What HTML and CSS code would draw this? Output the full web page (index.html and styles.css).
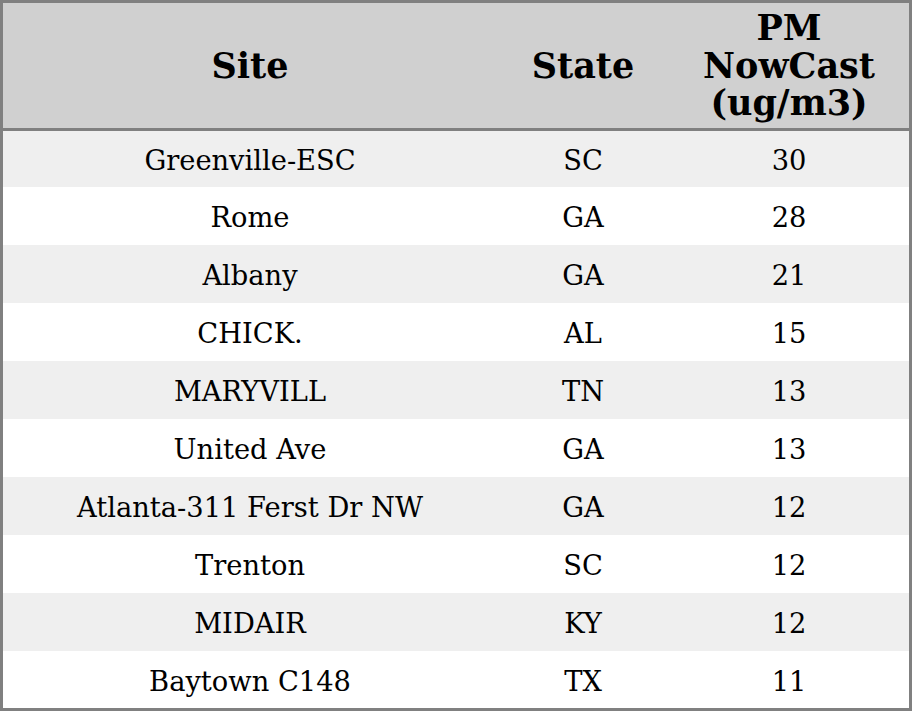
FILE: index.html
```html
<!DOCTYPE html>
<html>
<head>
<meta charset="utf-8">
<link rel="stylesheet" href="styles.css">
</head>
<body>
<table class="aq">
  <colgroup>
    <col class="c-site">
    <col class="c-state">
    <col class="c-pm">
  </colgroup>
  <thead>
    <tr><th>Site</th><th>State</th><th>PM<br>NowCast<br>(ug/m3)</th></tr>
  </thead>
  <tbody>
    <tr><td>Greenville-ESC</td><td>SC</td><td>30</td></tr>
    <tr><td>Rome</td><td>GA</td><td>28</td></tr>
    <tr><td>Albany</td><td>GA</td><td>21</td></tr>
    <tr><td>CHICK.</td><td>AL</td><td>15</td></tr>
    <tr><td>MARYVILL</td><td>TN</td><td>13</td></tr>
    <tr><td>United Ave</td><td>GA</td><td>13</td></tr>
    <tr><td>Atlanta-311 Ferst Dr NW</td><td>GA</td><td>12</td></tr>
    <tr><td>Trenton</td><td>SC</td><td>12</td></tr>
    <tr><td>MIDAIR</td><td>KY</td><td>12</td></tr>
    <tr><td>Baytown C148</td><td>TX</td><td>11</td></tr>
  </tbody>
</table>
</body>
</html>
```
FILE: styles.css
```css
html, body {
  margin: 0;
  padding: 0;
  background: #ffffff;
}
.aq {
  width: 912px;
  border: 3px solid #808080;
  border-collapse: separate;
  border-spacing: 0;
  table-layout: fixed;
  font-family: "DejaVu Serif", serif;
  color: #000;
}
.c-site { width: 494px; }
.c-state { width: 172px; }
.c-pm { width: 240px; }
.aq th {
  background: #d0d0d0;
  font-size: 35px;
  font-weight: bold;
  line-height: 37.5px;
  padding: 0;
  text-align: center;
  vertical-align: middle;
  border-bottom: 3px solid #808080;
  box-sizing: border-box;
}
.aq thead th { height: 128px; }
.aq td {
  font-size: 27.3px;
  line-height: 30px;
  height: 58px;
  padding: 4px 0 0;
  text-align: center;
  vertical-align: middle;
  box-sizing: border-box;
}
.aq tbody tr:nth-child(odd) td { background: #efefef; }
.aq tbody tr:first-child td { height: 56px; }
.aq tbody tr:last-child td { height: 57px; }
```
